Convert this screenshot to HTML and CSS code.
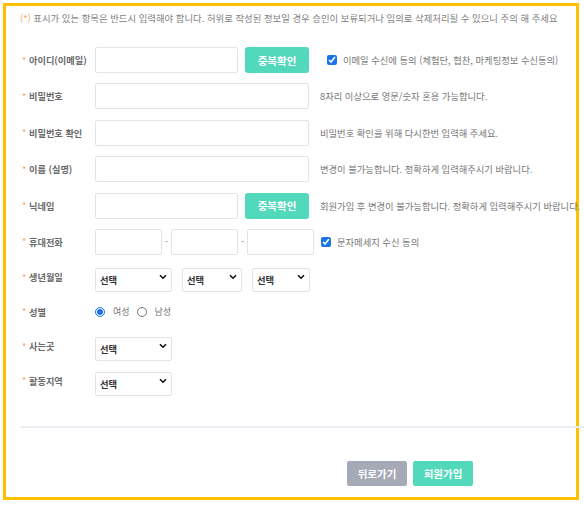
FILE: index.html
```html
<!DOCTYPE html>
<html lang="ko">
<head>
<meta charset="utf-8">
<title>회원가입</title>
<link rel="stylesheet" href="styles.css">
</head>
<body>
<div class="frame">
  <p class="note"><span class="req">(*)</span> 표시가 있는 항목은 반드시 입력해야 합니다. 허위로 작성된 정보일 경우 승인이 보류되거나 임의로 삭제처리될 수 있으니 주의 해 주세요</p>

  <div class="form">
    <div class="row">
      <label class="lbl"><span class="star">*</span>아이디(이메일)</label>
      <input class="inp mid" type="text">
      <button class="btn-check" type="button">중복확인</button>
      <label class="agree agree-email"><input class="chk" type="checkbox" checked><span>이메일 수신에 동의 (체험단, 협찬, 마케팅정보 수신동의)</span></label>
    </div>
    <div class="row">
      <label class="lbl"><span class="star">*</span>비밀번호</label>
      <input class="inp wide" type="password">
      <span class="hint">8자리 이상으로 영문/숫자 혼용 가능합니다.</span>
    </div>
    <div class="row">
      <label class="lbl"><span class="star">*</span>비밀번호 확인</label>
      <input class="inp wide" type="password">
      <span class="hint">비밀번호 확인을 위해 다시한번 입력해 주세요.</span>
    </div>
    <div class="row">
      <label class="lbl"><span class="star">*</span>이름 (실명)</label>
      <input class="inp wide" type="text">
      <span class="hint">변경이 불가능합니다. 정확하게 입력해주시기 바랍니다.</span>
    </div>
    <div class="row">
      <label class="lbl"><span class="star">*</span>닉네임</label>
      <input class="inp mid" type="text">
      <button class="btn-check" type="button">중복확인</button>
      <span class="hint">회원가입 후 변경이 불가능합니다. 정확하게 입력해주시기 바랍니다.</span>
    </div>
    <div class="row">
      <label class="lbl"><span class="star">*</span>휴대전화</label>
      <input class="inp phone" type="text">
      <span class="dash">-</span>
      <input class="inp phone" type="text">
      <span class="dash">-</span>
      <input class="inp phone" type="text">
      <label class="agree agree-sms"><input class="chk" type="checkbox" checked><span>문자메세지 수신 동의</span></label>
    </div>
    <div class="row row-s">
      <label class="lbl"><span class="star">*</span>생년월일</label>
      <span class="sel sel-y"><select><option>선택</option></select><svg class="chev" viewBox="0 0 8 6" width="8" height="6"><path d="M1 1.2 L4 4.2 L7 1.2" fill="none" stroke="#111" stroke-width="1.6"/></svg></span>
      <span class="sel sel-m"><select><option>선택</option></select><svg class="chev" viewBox="0 0 8 6" width="8" height="6"><path d="M1 1.2 L4 4.2 L7 1.2" fill="none" stroke="#111" stroke-width="1.6"/></svg></span>
      <span class="sel sel-d"><select><option>선택</option></select><svg class="chev" viewBox="0 0 8 6" width="8" height="6"><path d="M1 1.2 L4 4.2 L7 1.2" fill="none" stroke="#111" stroke-width="1.6"/></svg></span>
    </div>
    <div class="row row-s">
      <label class="lbl"><span class="star">*</span>성별</label>
      <label class="radio"><input class="rad" type="radio" name="g" checked><span>여성</span></label>
      <label class="radio"><input class="rad" type="radio" name="g"><span>남성</span></label>
    </div>
    <div class="row row-s">
      <label class="lbl"><span class="star">*</span>사는곳</label>
      <span class="sel sel-y"><select><option>선택</option></select><svg class="chev" viewBox="0 0 8 6" width="8" height="6"><path d="M1 1.2 L4 4.2 L7 1.2" fill="none" stroke="#111" stroke-width="1.6"/></svg></span>
    </div>
    <div class="row row-s">
      <label class="lbl"><span class="star">*</span>활동지역</label>
      <span class="sel sel-y"><select><option>선택</option></select><svg class="chev" viewBox="0 0 8 6" width="8" height="6"><path d="M1 1.2 L4 4.2 L7 1.2" fill="none" stroke="#111" stroke-width="1.6"/></svg></span>
    </div>
  </div>

  <div class="divider"></div>

  <div class="actions">
    <button class="btn btn-back" type="button">뒤로가기</button>
    <button class="btn btn-join" type="button">회원가입</button>
  </div>
</div>
</body>
</html>
```

FILE: styles.css
```css
html, body {
  margin: 0;
  padding: 0;
  overflow: hidden;
  background: #ffffff;
}

body {
  width: 584px;
  height: 505px;
  font-family: "Noto Sans CJK KR", "Noto Sans", sans-serif;
  color: #555;
}

.frame {
  box-sizing: border-box;
  width: 576px;
  height: 497px;
  margin: 3px;
  border: 3px solid #ffc000;
  padding: 6px 0 0 14px;
}

.note {
  margin: 0;
  font-size: 9.4px;
  line-height: 12px;
  color: #808080;
  white-space: nowrap;
}

.req {
  color: #f5a464;
}

.form {
  margin-top: 23px;
  display: flex;
  flex-direction: column;
  gap: 10.4px;
}

.row {
  display: flex;
  align-items: center;
  height: 26px;
  padding-left: 2px;
  white-space: nowrap;
}

.row-s {
  height: 24px;
}

.lbl {
  width: 73px;
  flex: none;
  font-size: 9.2px;
  font-weight: 700;
  color: #6a6a6a;
  display: flex;
  align-items: center;
}

.star {
  color: #f5a464;
  font-size: 9px;
  width: 7px;
  font-weight: 400;
}

.inp {
  box-sizing: border-box;
  height: 26px;
  border: 1px solid #e2e4ec;
  border-radius: 2px;
  margin: 0;
  padding: 0 5px;
  background: #fff;
  flex: none;
}

.inp.mid { width: 143px; }
.inp.wide { width: 214px; }
.inp.phone { width: 67px; }

.dash {
  width: 9px;
  text-align: center;
  font-size: 9px;
  color: #888;
}

.btn-check {
  box-sizing: border-box;
  width: 64px;
  height: 26px;
  margin: 0 0 0 7px;
  border: 0;
  border-radius: 3px;
  background: #52d9bb;
  color: #fff;
  font-family: inherit;
  font-size: 10.5px;
  font-weight: 700;
  padding: 0;
  flex: none;
}

.hint {
  margin-left: 11px;
  font-size: 9.3px;
  color: #777;
}

.agree {
  display: flex;
  align-items: center;
  font-size: 9.3px;
  color: #777;
}

.agree-email { margin-left: 18px; }
.agree-sms { margin-left: 7px; }

.chk {
  width: 10px;
  height: 10px;
  margin: 0 6px 0 0;
  accent-color: #1a73e8;
}

.sel {
  position: relative;
  display: block;
  flex: none;
  height: 24px;
}

.sel select {
  box-sizing: border-box;
  appearance: none;
  -webkit-appearance: none;
  width: 100%;
  height: 24px;
  margin: 0;
  border: 1px solid #e2e4ec;
  border-radius: 2px;
  background: #fff;
  padding: 0 0 0 4px;
  font-family: inherit;
  font-size: 9.3px;
  font-weight: 700;
  color: #333;
}

.sel .chev {
  position: absolute;
  right: 5px;
  top: 9px;
  pointer-events: none;
}

.sel-y { width: 77px; }
.sel-m { width: 60px; margin-left: 10px; }
.sel-d { width: 58px; margin-left: 10px; }

.radio {
  display: flex;
  align-items: center;
  font-size: 9px;
  color: #777;
  margin-right: 7px;
}

.rad {
  width: 10px;
  height: 10px;
  margin: 0 8px 0 0;
  accent-color: #1a73e8;
}

.divider {
  width: 563px;
  height: 2px;
  background: #ececf2;
  margin: 33px 0 0 1px;
}

.actions {
  display: flex;
  gap: 6px;
  margin-top: 33px;
  padding-left: 327px;
}

.btn {
  box-sizing: border-box;
  width: 60px;
  height: 25px;
  border: 0;
  border-radius: 2px;
  padding: 0;
  color: #fff;
  font-family: inherit;
  font-size: 10.5px;
  font-weight: 700;
}

.btn-back { background: #a6a9b6; }
.btn-join { background: #52d9bb; }
```
